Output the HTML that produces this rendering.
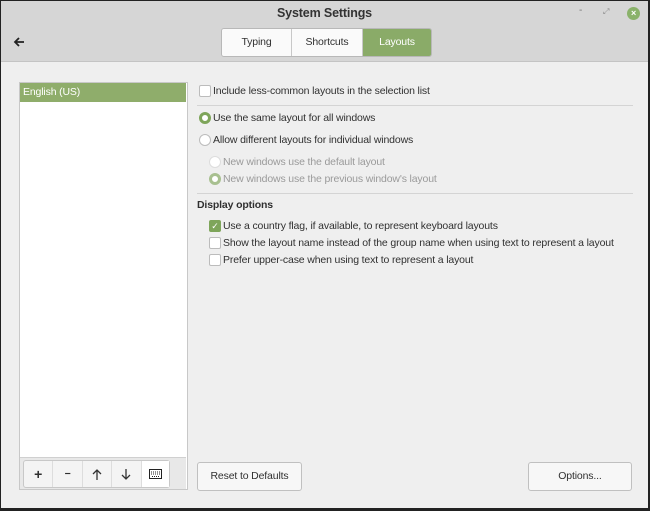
<html><head><style>
body{margin:0;width:650px;height:511px;overflow:hidden;background:#222;font-family:"Liberation Sans",sans-serif;font-size:10.5px;letter-spacing:-0.15px;color:#303030}
.win{position:absolute;left:1px;top:1px;width:647px;height:507px;background:#efefef}
.hdr{position:absolute;left:0;top:0;width:647px;height:60px;background:#d6d6d6;border-bottom:1px solid #c4c4c4}
.title{position:absolute;top:5px;width:100%;text-align:center;font-weight:bold;font-size:12.5px;color:#333}
.tabs{position:absolute;left:220px;top:27px;height:27px;display:flex;border:1px solid #b8b8b8;border-radius:3px;overflow:hidden}
.tabs div{height:27px;line-height:27px;text-align:center;background:#fafafa;border-right:1px solid #c8c8c8}
.t{position:absolute;white-space:nowrap;line-height:13px}
.cb{position:absolute;width:10px;height:10px;border:1px solid #bcbcbc;border-radius:2px;background:#fff}
.rb{position:absolute;width:10px;height:10px;border:1px solid #bcbcbc;border-radius:50%;background:#fff}
.btn{position:absolute;border:1px solid #c0c0c0;border-radius:3px;background:#f7f7f7;text-align:center;line-height:27px;height:27px}
.sep{position:absolute;height:1px;background:#d4d4d4}
.tb{display:flex;align-items:center;justify-content:center;border-right:1px solid #ddd;height:26px}
</style></head><body><div class="win">
<div class="hdr">
<div class="title">System Settings</div>
<div class="t" style="left:578px;top:3px;font-size:10px;color:#777">-</div>
<div class="t" style="left:602px;top:4px;font-size:8px;color:#888">⤢</div>
<div style="position:absolute;left:626px;top:6px;width:13px;height:13px;border-radius:50%;background:#8ab26a;color:#fff;font-size:9px;line-height:13px;text-align:center;font-weight:bold">×</div>
<svg style="position:absolute;left:12px;top:35px" width="12" height="12" viewBox="0 0 12 12"><path d="M11 6H2M6 2L2 6L6 10" stroke="#222" stroke-width="1.8" fill="none"/></svg>
<div class="tabs"><div style="width:69px">Typing</div><div style="width:70px">Shortcuts</div><div style="width:68px;background:#8aab68;color:#fff;border:none">Layouts</div></div>
</div>
<div style="position:absolute;left:18px;top:81px;width:167px;height:406px;background:#fff;border:1px solid #c8c8c8"></div>
<div style="position:absolute;left:19px;top:82px;width:166px;height:19px;background:#8fad6b;color:#fff;line-height:19px;padding-left:3px;box-sizing:border-box">English (US)</div>
<div style="position:absolute;left:19px;top:456px;width:166px;height:31px;background:#e8e8e8;border-top:1px solid #d0d0d0"></div>
<div style="position:absolute;left:22px;top:459px;width:145px;height:26px;border:1px solid #c8c8c8;border-radius:3px;background:#f4f4f4;display:flex">
<div class="tb" style="width:29px;font-weight:bold;font-size:14px">+</div>
<div class="tb" style="width:29px;font-weight:bold">−</div>
<div class="tb" style="width:29px"><svg width="10" height="11"><path d="M5 11V1M1 5L5 1L9 5" stroke="#333" stroke-width="1.3" fill="none"/></svg></div>
<div class="tb" style="width:29px"><svg width="10" height="11"><path d="M5 0V10M1 6L5 10L9 6" stroke="#333" stroke-width="1.3" fill="none"/></svg></div>
<div class="tb" style="width:28px;background:#fff;border:none"><svg width="13" height="10"><rect x="0.5" y="0.5" width="12" height="9" fill="#fff" stroke="#222"/><path d="M2 3h9M2 5h9M3 7.5h7" stroke="#222" stroke-width="1" stroke-dasharray="1 1"/></svg></div>
</div>
<div class="cb" style="left:198px;top:84px"></div><div class="t" style="left:212px;top:84px">Include less-common layouts in the selection list</div>
<div class="sep" style="left:196px;top:104px;width:436px"></div>
<div class="rb" style="left:198px;top:111px;border:3px solid #7ea55a;width:6px;height:6px"></div><div class="t" style="left:212px;top:111px">Use the same layout for all windows</div>
<div class="rb" style="left:198px;top:133px"></div><div class="t" style="left:212px;top:133px">Allow different layouts for individual windows</div>
<div class="rb" style="left:208px;top:155px;border-color:#ddd"></div><div class="t" style="left:222px;top:155px;color:#9a9a9a">New windows use the default layout</div>
<div class="rb" style="left:208px;top:172px;border:3px solid #a8c090;width:6px;height:6px"></div><div class="t" style="left:222px;top:172px;color:#9a9a9a">New windows use the previous window's layout</div>
<div class="sep" style="left:196px;top:192px;width:436px"></div>
<div class="t" style="left:196px;top:198px;font-weight:bold">Display options</div>
<div class="cb" style="left:208px;top:219px;background:#7ea55a;border-color:#7ea55a;color:#fff;font-size:9px;line-height:10px;text-align:center">✓</div><div class="t" style="left:222px;top:219px">Use a country flag, if available,  to represent keyboard layouts</div>
<div class="cb" style="left:208px;top:236px"></div><div class="t" style="left:222px;top:236px">Show the layout name instead of the group name when using text to represent a layout</div>
<div class="cb" style="left:208px;top:253px"></div><div class="t" style="left:222px;top:253px">Prefer upper-case when using text to represent a layout</div>
<div class="btn" style="left:196px;top:461px;width:103px">Reset to Defaults</div>
<div class="btn" style="left:527px;top:461px;width:102px">Options...</div>
</div></body></html>
